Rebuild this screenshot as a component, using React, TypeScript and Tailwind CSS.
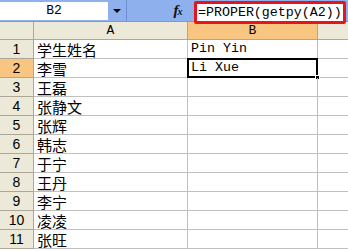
const rows: { cn: string; py?: string }[] = [
  { cn: '学生姓名', py: 'Pin Yin' },
  { cn: '李雪', py: 'Li Xue' },
  { cn: '王磊' },
  { cn: '张静文' },
  { cn: '张辉' },
  { cn: '韩志' },
  { cn: '于宁' },
  { cn: '王丹' },
  { cn: '李宁' },
  { cn: '凌凌' },
  { cn: '张旺' },
]

const mono = "font-['Liberation_Mono','Noto_Sans_CJK_SC',monospace]"
const cjk = "font-['Noto_Sans_CJK_SC',sans-serif]"

export default function App() {
  return (
    <div className="h-[251px] w-[348px] overflow-hidden bg-white">
      {/* formula bar */}
      <div className="flex h-[22px] items-stretch border-b border-[#7f9db9] bg-[#8eb0ec]">
        <div className={`mt-[2px] mb-[1px] flex w-[108px] items-center justify-center bg-white text-[13px] text-black ${mono}`}>
          B2
        </div>
        <div className="flex w-[19px] items-center justify-center border-r border-[#6f8fd0]">
          <span className="block h-0 w-0 border-x-[4px] border-t-[4px] border-x-transparent border-t-black" />
        </div>
        <div className="flex-1" />
        <div className="flex w-[18px] items-center justify-center text-[15px] font-bold italic leading-none text-[#101010] font-['Liberation_Serif',serif]">
          f<span className="-ml-[1px] mt-[3px] text-[10px]">x</span>
        </div>
        <div className={`relative z-10 mt-[1px] -mb-[3px] mr-[2px] ml-[7px] flex w-[152px] items-center rounded-[2px] border-[3px] border-[#e8141c] bg-white pl-[1px] text-[13.3px] text-black ${mono}`}>
          =PROPER(getpy(A2))
        </div>
      </div>

      {/* sheet grid */}
      <div className="grid grid-cols-[34px_154px_130px_1fr] grid-rows-[18px] auto-rows-[19px]">
        <div className="border-r border-b border-[#aca899] bg-[#ece9d8]" />
        <div className={`flex items-center justify-center border-r border-b border-[#aca899] bg-[#ece9d8] text-[13px] text-black ${mono}`}>
          A
        </div>
        <div className={`flex items-center justify-center border-r border-b border-[#aca899] bg-[#f8c680] text-[13px] text-black ${mono}`}>
          B
        </div>
        <div className="border-b border-[#aca899] bg-[#ece9d8]" />

        {rows.map((r, i) => {
          const sel = i === 1
          return (
            <div key={i} className="contents">
              <div
                className={`flex items-center justify-center border-r border-b border-[#aca899] text-[14px] text-black font-['Liberation_Sans',sans-serif] ${
                  sel ? 'bg-[#f8c680]' : 'bg-[#ece9d8]'
                }`}
              >
                {i + 1}
              </div>
              <div className={`flex items-center border-r border-b border-[#c0c0c0] pl-[3px] text-[15px] leading-none text-black ${cjk}`}>
                {r.cn}
              </div>
              <div
                className={`relative flex items-center border-r border-b border-[#c0c0c0] pl-[3px] text-[13.3px] text-black ${mono}`}
              >
                {sel && (
                  <>
                    <span className="absolute -top-[1px] -left-[1px] -right-[1px] -bottom-[1px] border-2 border-black" />
                    <span className="absolute -right-[3px] -bottom-[3px] h-[5px] w-[5px] border border-white bg-black" />
                  </>
                )}
                <span className="relative">{r.py}</span>
              </div>
              <div className="border-b border-[#c0c0c0]" />
            </div>
          )
        })}
      </div>
    </div>
  )
}
